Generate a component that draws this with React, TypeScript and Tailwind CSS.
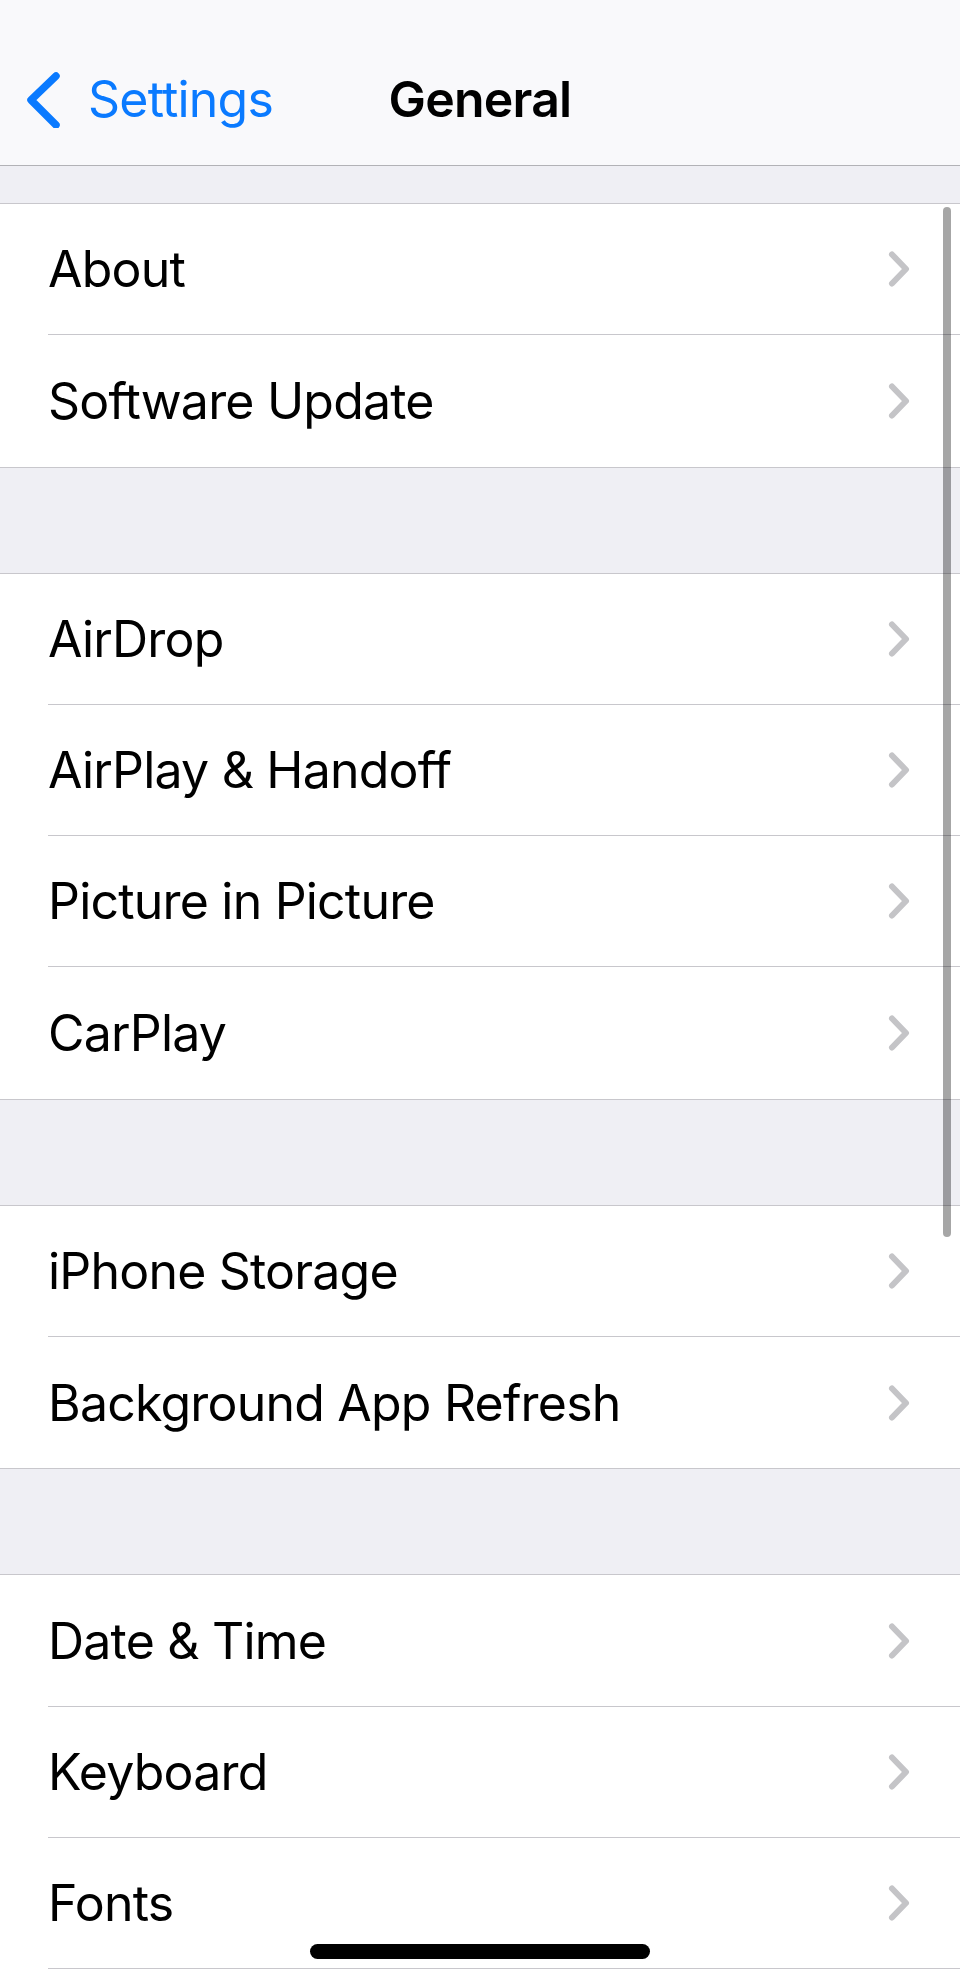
import React from "react";

const sections: string[][] = [
  ["About", "Software Update"],
  ["AirDrop", "AirPlay & Handoff", "Picture in Picture", "CarPlay"],
  ["iPhone Storage", "Background App Refresh"],
  ["Date & Time", "Keyboard", "Fonts", ""],
];

function Chevron() {
  return (
    <svg width="26" height="40" viewBox="0 0 26 40" className="shrink-0">
      <path
        d="M6 5.5 L20 20 L6 34.5"
        fill="none"
        stroke="#c4c4c7"
        strokeWidth="6"
        strokeLinecap="round"
        strokeLinejoin="round"
      />
    </svg>
  );
}

function Row({ label, last }: { label: string; last: boolean }) {
  return (
    <div className="h-[131.3px] pl-[48px] bg-white flex">
      <div
        className={
          "flex-1 flex items-center pr-[48px] " +
          (last ? "" : "border-b border-[#c8c7cc]")
        }
      >
        {label ? (
          <>
            <span className="flex-1 text-[50px] leading-none text-black tracking-[-0.8px]">
              {label}
            </span>
            <Chevron />
          </>
        ) : null}
      </div>
    </div>
  );
}

export default function App() {
  return (
    <div
      className="relative w-[960px] h-[1983px] overflow-hidden bg-[#efeff4]"
      style={{ fontFamily: "Inter, 'Noto Sans', sans-serif" }}
    >
      <div className="h-[166px] bg-[#f9f9fb] border-b border-[#b2b2b6] relative pt-[52px]">
        <div className="flex items-center h-[94px] pl-[26px]">
          <svg width="36" height="60" viewBox="0 0 36 60" className="shrink-0 -mt-[2px]">
            <path
              d="M30 8 L5 32 L30 57"
              fill="none"
              stroke="#0a7aff"
              strokeWidth="7.5"
              strokeLinecap="round"
              strokeLinejoin="round"
            />
          </svg>
          <span className="ml-[26px] text-[50px] leading-none text-[#0a7aff] tracking-[-0.8px]">
            Settings
          </span>
        </div>
        <div className="absolute left-0 right-0 top-[52px] h-[94px] flex items-center justify-center">
          <span className="text-[50px] leading-none font-semibold text-black tracking-[-0.8px]">
            General
          </span>
        </div>
      </div>
      <div className="h-[37px]" />
      <div className="flex flex-col gap-[105px]">
        {sections.map((rows, si) => (
          <div key={si} className="border-y border-[#c8c7cc] bg-white">
            {rows.map((r, i) => (
              <Row key={si + "-" + i} label={r} last={i === rows.length - 1} />
            ))}
          </div>
        ))}
      </div>
      <div className="absolute left-[943px] top-[207px] w-[8px] h-[1030px] rounded-full bg-black/35" />
      <div className="absolute left-[310px] top-[1944px] w-[340px] h-[15px] rounded-full bg-black" />
    </div>
  );
}
